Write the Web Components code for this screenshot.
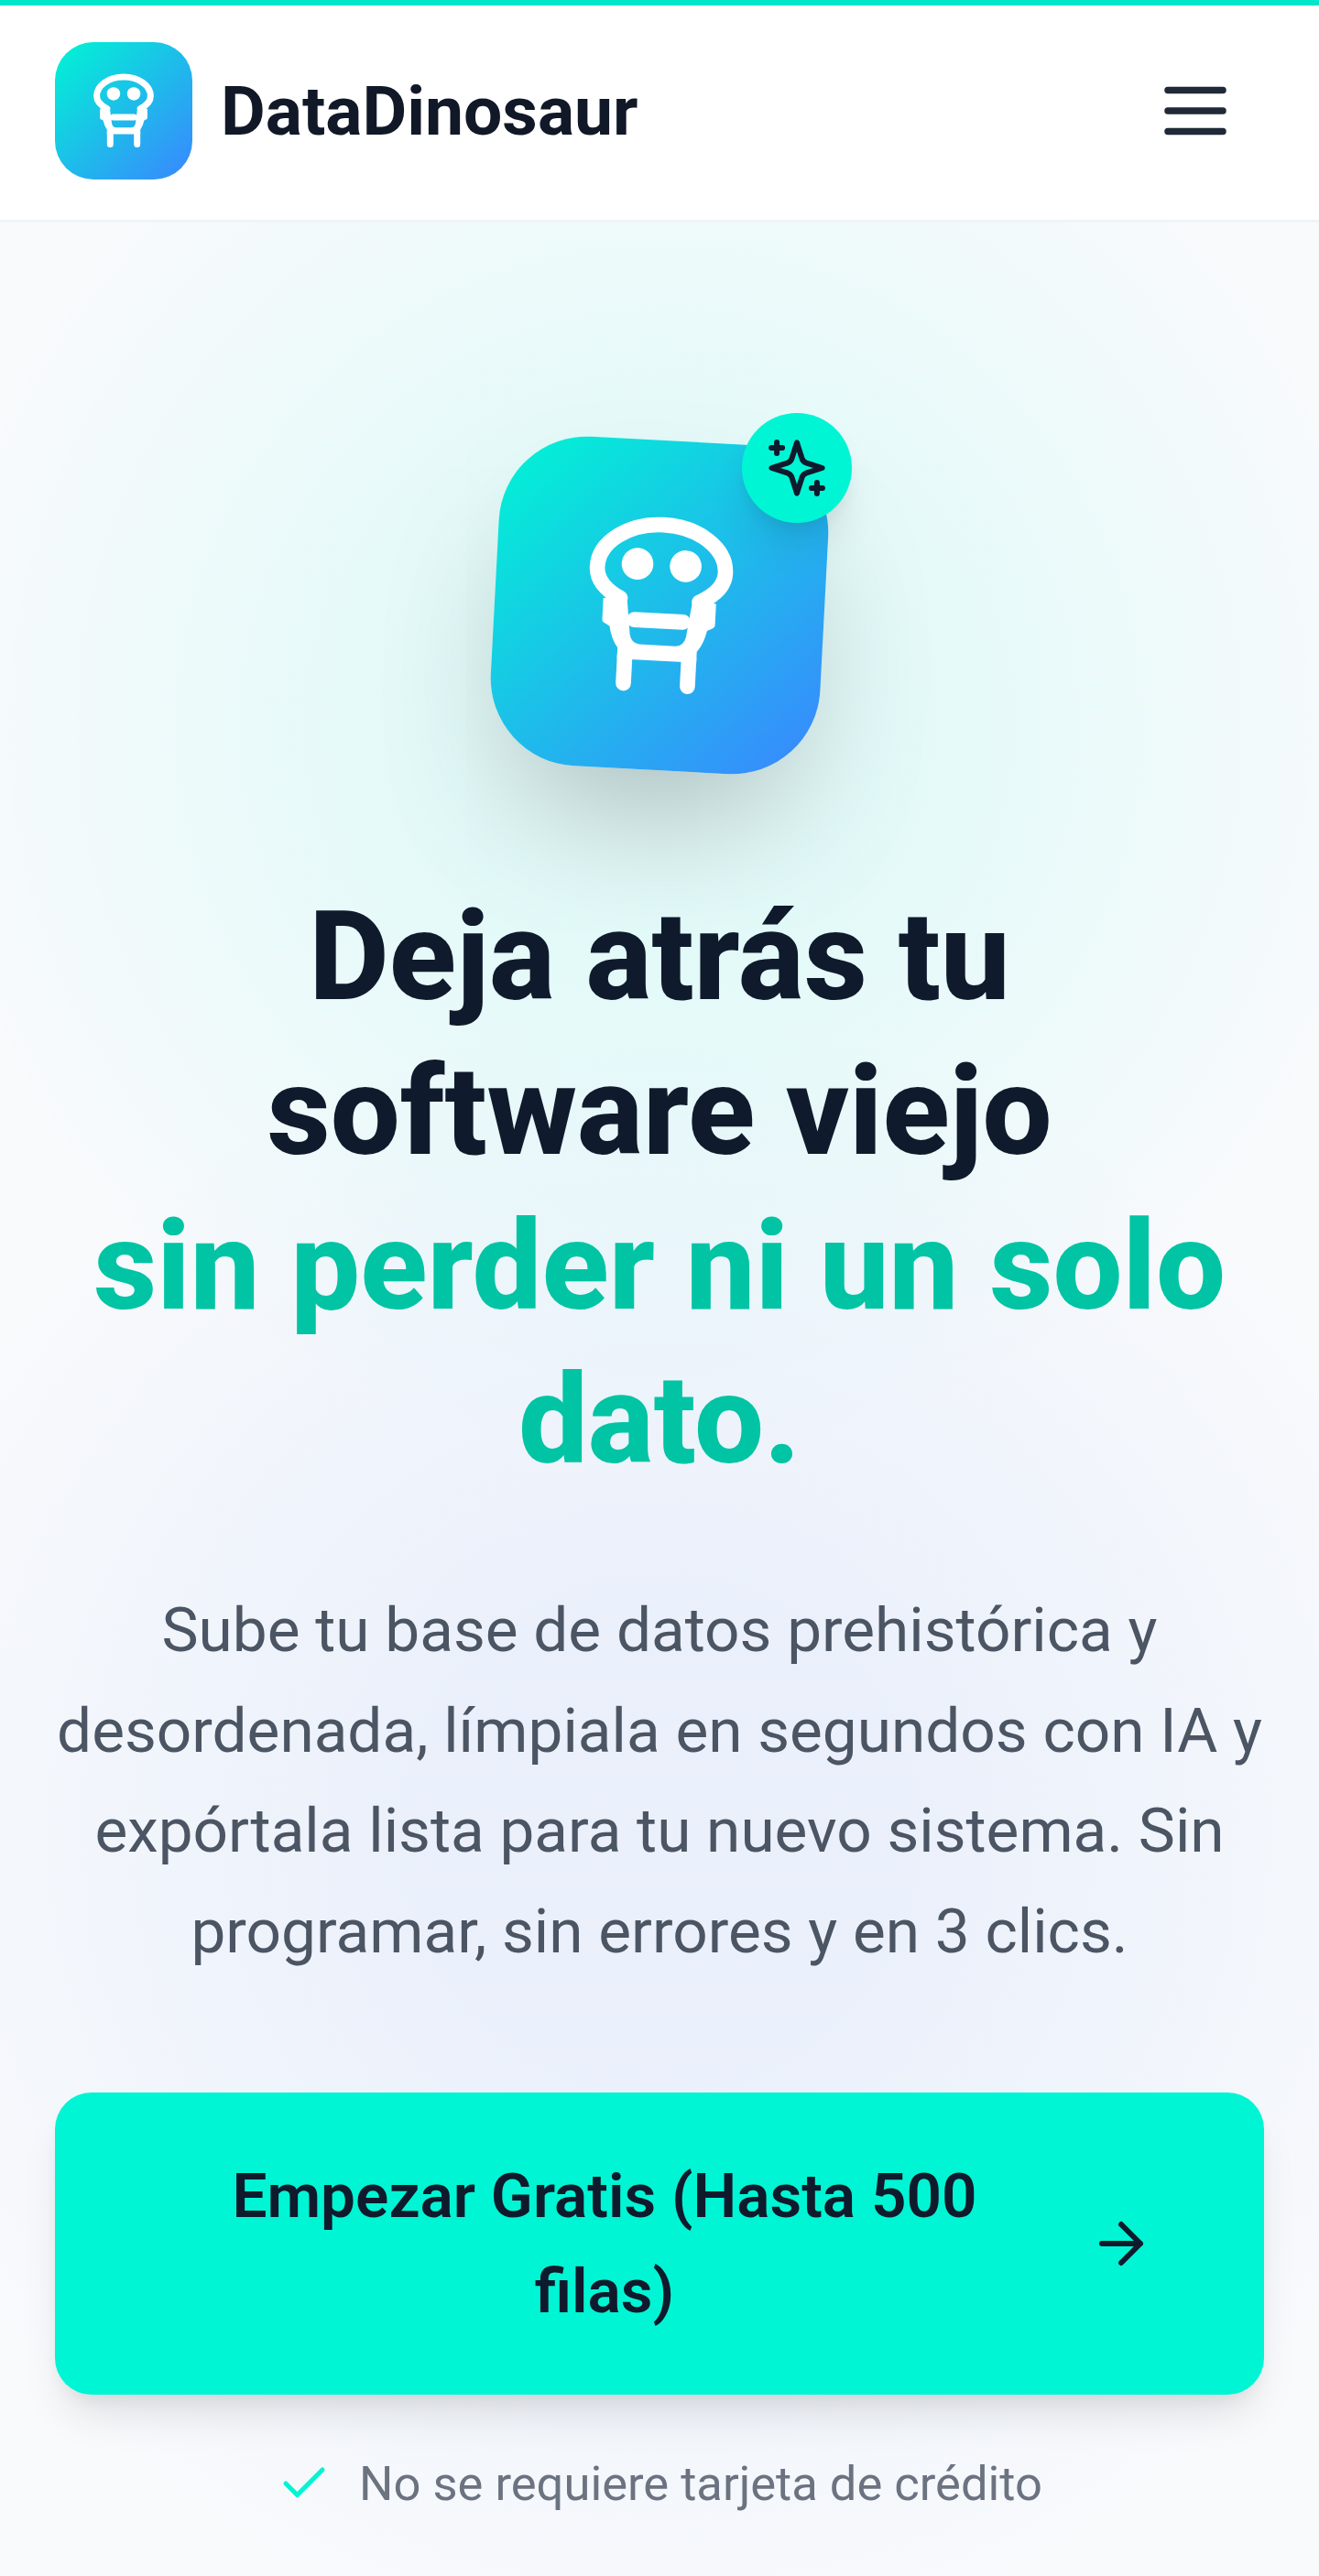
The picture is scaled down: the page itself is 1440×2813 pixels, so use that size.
<!DOCTYPE html>
<html lang="es"><head><meta charset="utf-8"><title>DataDinosaur</title>
<style>html,body{margin:0;padding:0;font-family:Roboto,"Liberation Sans",sans-serif;background:#f8fafc}</style></head>
<body>
<dd-page></dd-page>
<script>
const def=(name,html)=>{customElements.define(name,class extends HTMLElement{constructor(){super();this.attachShadow({mode:'open'}).innerHTML=html}})};
def('dd-skull',`<style>:host{display:block;width:var(--w,200px);height:calc(var(--w,200px)*1.0667)}svg{display:block;width:100%;height:100%}</style>
<svg viewBox="-300 -189 600 640" fill="none" stroke="#fff" stroke-linecap="round" stroke-linejoin="round">
<path stroke-width="50" d="M-130 115C-180 90-210 60-210 16C-210-65-115.500-132 0-132S210-65 210 16C210 60 180 90 130 115"/>
<path fill="#fff" stroke="none" d="M-108 108L-92 232Q-86 260-60 263H60Q86 260 92 232L108 108L185 118V188Q185 196 175 200L160 208Q152 250 130 278V314H-130V278Q-152 250-160 208L-175 200Q-185 196-185 188V118Z"/>
<path stroke-width="50" d="M-80 183H80M-105 300V393M105 300V393"/>
<circle cx="-79" cy="0" r="52" fill="#fff" stroke="none"/><circle cx="79" cy="0" r="52" fill="#fff" stroke="none"/>
</svg>`);
def('dd-logo',`<style>:host{display:flex;align-items:center;justify-content:center;width:150px;height:150px;border-radius:42px;background:linear-gradient(135deg,#00f5d4,#3a86ff);--w:84px}</style><dd-skull></dd-skull>`);
def('dd-header',`<style>:host{display:block;position:relative;box-sizing:border-box;height:243px;background:#fff;border-bottom:3px solid #f1f4f6}
.t{position:absolute;left:0;right:0;top:0;height:6px;background:#00e6c8}
.r{display:flex;align-items:center;justify-content:space-between;box-sizing:border-box;height:242px;padding:0 90px 0 60px}
.b{display:flex;align-items:center;gap:31px;font:700 75px/1 Roboto,sans-serif;color:#111827}
svg{display:block;width:90px;height:90px}</style>
<div class="t"></div>
<div class="r"><div class="b"><dd-logo></dd-logo><span>DataDinosaur</span></div>
<svg viewBox="0 0 24 24" fill="none" stroke="#1f2937" stroke-width="2" stroke-linecap="round"><path d="M4 6h16M4 12h16M4 18h16"/></svg></div>`);
def('dd-hero-icon',`<style>:host{display:block;position:relative;width:360px;height:360px}
.b{width:100%;height:100%;border-radius:96px;background:linear-gradient(135deg,#00f5d4,#3a86ff);transform:rotate(3deg);box-shadow:0 75px 150px -36px rgba(0,0,0,.25);display:flex;align-items:center;justify-content:center;--w:200px}
.s{position:absolute;top:-30px;right:-30px;width:120px;height:120px;border-radius:50%;background:#00f5d4;display:flex;align-items:center;justify-content:center;box-shadow:0 30px 45px -9px rgba(0,0,0,.1),0 12px 18px -6px rgba(0,0,0,.06)}
svg{display:block;width:72px;height:72px}</style>
<div class="b"><dd-skull></dd-skull></div>
<div class="s"><svg viewBox="0 0 24 24" fill="none" stroke="#0f1a2c" stroke-width="2" stroke-linecap="round" stroke-linejoin="round"><path d="M12 2.800L13.900 8.700Q14.300 9.700 15.300 10.100L21.200 12L15.300 13.900Q14.300 14.300 13.900 15.300L12 21.200L10.100 15.300Q9.700 14.300 8.700 13.900L2.800 12L8.700 10.100Q9.700 9.700 10.100 8.700Z"/><path d="M4.700 2.700v4M2.700 4.700h4M19.300 17.300v4M17.300 19.300h4"/></svg></div>`);
def('dd-cta',`<style>:host{display:flex;align-items:center;justify-content:center;gap:48px;box-sizing:border-box;width:1320px;height:330px;padding:0 120px;border-radius:40px;background:#00f5d4;color:#0f1a2c;box-shadow:0 30px 45px -9px rgba(0,0,0,.1),0 12px 18px -6px rgba(0,0,0,.05);font:600 67.5px/104px Roboto,sans-serif;text-align:center}
span{flex:1}svg{flex:none;display:block;width:72px;height:72px}</style>
<span><slot></slot></span><svg viewBox="0 0 24 24" fill="none" stroke="#0f1a2c" stroke-width="2" stroke-linecap="round" stroke-linejoin="round"><path d="M5 12h14M12 5l7 7-7 7"/></svg>`);
def('dd-note',`<style>:host{display:flex;align-items:center;justify-content:center;gap:30px;font:400 52.5px/72px Roboto,sans-serif;color:#6b7280}
svg{display:block;width:60px;height:60px}</style>
<svg viewBox="0 0 24 24" fill="none" stroke="#00f5d4" stroke-width="2" stroke-linecap="round" stroke-linejoin="round"><path d="M20 6 9 17l-5-5"/></svg><span><slot></slot></span>`);
def('dd-hero',`<style>:host{display:flex;flex-direction:column;align-items:center;box-sizing:border-box;height:2570px;padding:238px 60px 0;text-align:center;
background:radial-gradient(circle 800px at 720px 550px,rgba(0,245,212,.09) 30%,rgba(0,245,212,0) 100%),radial-gradient(circle 900px at 720px 1760px,rgba(60,110,240,.07) 30%,rgba(60,110,240,0) 100%),#f8fafc}
h1{margin:120px 0 0;font:800 135px/168.75px Roboto,sans-serif;color:#0f1a2c}
h1 b{display:block;font-weight:inherit;color:#00c4a4}
p{margin:89px 0 0;font:400 67.5px/109.69px Roboto,sans-serif;color:#4b5563;width:1320px}
dd-cta{margin-top:121px}dd-note{margin-top:61px}</style>
<dd-hero-icon></dd-hero-icon>
<h1>Deja atrás tu<br>software viejo<b>sin perder ni un solo dato.</b></h1>
<p>Sube tu base de datos prehistórica y desordenada, límpiala en segundos con IA y expórtala lista para tu nuevo sistema. Sin programar, sin errores y en 3 clics.</p>
<dd-cta>Empezar Gratis (Hasta 500 filas)</dd-cta>
<dd-note>No se requiere tarjeta de crédito</dd-note>`);
def('dd-page',`<style>:host{display:block;width:1440px;height:2813px;overflow:hidden}</style><dd-header></dd-header><dd-hero></dd-hero>`);
</script></body></html>
